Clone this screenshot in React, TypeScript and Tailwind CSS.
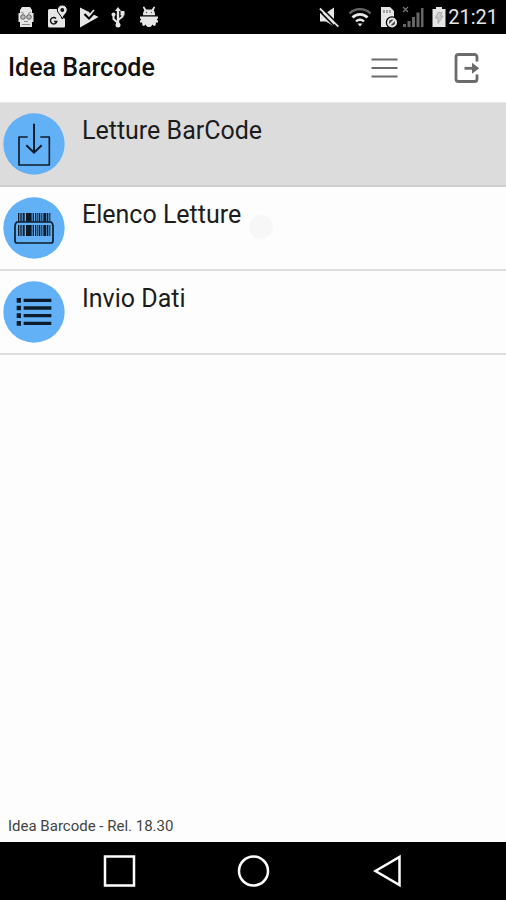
import type { ReactNode } from "react";

function StatusBar() {
  return (
    <div className="flex h-[34px] shrink-0 items-center justify-between bg-black pl-[17px] pr-2 text-[#e6e6e6]">
      <div className="flex items-center gap-3">
        {/* robot head */}
        <svg width="18" height="24" viewBox="0 0 18 24" fill="currentColor" aria-hidden="true">
          <path d="M5 2h8l2 3v3h1.500v9H15v5H3v-5H1.500V8H3V5z" />
          <path d="M4 7l3 1.500M14 7l-3 1.500M7 16.500h4M5 19.500h8" stroke="#888" strokeWidth="1" />
          <circle cx="6" cy="12" r="2.300" fill="#bbb" stroke="#555" strokeWidth="0.900" />
          <circle cx="12" cy="12" r="2.300" fill="#bbb" stroke="#555" strokeWidth="0.900" />
        </svg>
        {/* maps */}
        <svg width="21" height="24" viewBox="0 0 21 24" fill="currentColor" aria-hidden="true">
          <path d="M2.500 4H12l5 10 1-1v8.500a1 1 0 0 1-1 1H2.500a1.500 1.500 0 0 1-1.500-1.500V5.500A1.500 1.500 0 0 1 2.500 4z" />
          <path d="M9 13.500a3.200 3.200 0 1 0 .8 3H7" fill="none" stroke="#111" strokeWidth="1.400" />
          <path d="M15.300 0a5 5 0 0 1 5 5c0 3-3.500 4.500-5 9-1.500-4.500-5-6-5-9a5 5 0 0 1 5-5z" stroke="#000" strokeWidth="1" />
          <circle cx="15.300" cy="5" r="1.900" fill="#111" />
        </svg>
        {/* play store */}
        <svg width="19" height="24" viewBox="0 0 19 24" fill="currentColor" aria-hidden="true">
          <path d="M0 2.500l8 4 10.500 5.500L0 22.500z" />
          <path d="M9 8l6-5 3 3-3 4z" fill="#000" />
          <path d="M4.500 9l4.500 4.500L16 6" fill="none" stroke="#000" strokeWidth="2.200" />
          <path d="M6 7.500l3 3L14 5" fill="none" stroke="currentColor" strokeWidth="1.600" />
        </svg>
        {/* usb */}
        <svg className="-ml-0.5" width="18" height="24" viewBox="0 0 18 24" fill="currentColor" aria-hidden="true">
          <path d="M9 2l3 4h-1.800v13H7.800V6H6z" />
          <circle cx="9" cy="20" r="2.500" />
          <path d="M9 18l-4.500-4v-4M9 15l4.500-3.500V8" fill="none" stroke="currentColor" strokeWidth="2" />
          <circle cx="4.500" cy="9.500" r="2" />
          <path d="M11.500 6h4v4.500h-4z" />
        </svg>
        {/* debug bug */}
        <svg width="20" height="24" viewBox="0 0 20 24" fill="currentColor" aria-hidden="true">
          <path d="M4 10.300C4 7.500 4.500 6.500 5.300 5.500L3.800 2 5.200 1.500l2 3h5.600l2-3 1.400.5-1.500 3.500c.8 1 1.300 2 1.300 4.800z" />
          <path d="M1 11.500h18v2.200h-1v1.600h1v2.200h-2l-.5 3-1.500.5-1.500-1.500C12.500 21.500 11.500 22 10 22s-2.500-.5-3.500-2.500L5 21l-1.500-.5-.5-3H1v-2.200h1v-1.600H1z" />
          <circle cx="7.500" cy="7.500" r="0.700" fill="#555" />
          <circle cx="12.500" cy="7.500" r="0.700" fill="#555" />
        </svg>
      </div>
      <div className="flex items-center">
        {/* muted speaker */}
        <svg className="mr-2" width="22" height="24" viewBox="0 0 22 24" fill="currentColor" aria-hidden="true">
          <path d="M2 8h6l8-5.500v19L8 16.500H2z" />
          <path d="M0 4.500l17.500 18" stroke="#000" strokeWidth="1.600" />
          <path d="M2 3.500l18.500 18" stroke="currentColor" strokeWidth="2" />
          <path d="M3.500 2.500l18 18" stroke="#000" strokeWidth="1.400" />
        </svg>
        {/* wifi */}
        <svg className="mr-2" width="24" height="24" viewBox="0 0 24 24" fill="none" stroke="currentColor" aria-hidden="true">
          <path d="M1.500 8.500a15 15 0 0 1 21 0" stroke="#666" strokeWidth="2.200" />
          <path d="M4.500 12.500a10.500 10.500 0 0 1 15 0" strokeWidth="2.800" />
          <path d="M8 16.500a5.600 5.600 0 0 1 8 0" strokeWidth="2.500" />
          <path d="M9.500 18.500h5L12 21.500z" fill="currentColor" stroke="none" />
        </svg>
        {/* sim card */}
        <svg className="mr-1" width="18" height="24" viewBox="0 0 18 24" fill="currentColor" aria-hidden="true">
          <path d="M1 2h9l4 4v16H1z" />
          <path d="M4 5v3M7 5v3M10 5v3" stroke="#777" strokeWidth="1.200" />
          <circle cx="12" cy="17.500" r="4.500" fill="#555" stroke="#000" strokeWidth="3.500" />
          <circle cx="12" cy="17.500" r="4" fill="#444" stroke="currentColor" strokeWidth="2" />
          <path d="M9 20.500l6-6" stroke="currentColor" strokeWidth="2" />
        </svg>
        {/* no signal */}
        <svg className="mr-2" width="22" height="24" viewBox="0 0 22 24" fill="#666" aria-hidden="true">
          <path d="M1 19h3v3H1zM5.500 16h3v6h-3zM10 12h3v10h-3zM14.500 7.500h3V22h-3zM19 3h2.500v19H19z" />
          <path d="M1 2l5 5M6 2L1 7" stroke="#777" strokeWidth="1.200" />
        </svg>
        {/* battery */}
        <svg className="mr-0.5" width="14" height="24" viewBox="0 0 14 24" fill="currentColor" aria-hidden="true">
          <path d="M4 2h6v2h3.500v18H.5V4H4z" />
          <path d="M6 7.500h4L8.500 11H11l-5 7.500V13H3.500z" fill="#ccc" stroke="#999" strokeWidth="0.700" />
        </svg>
        <span className="text-xl leading-6">21:21</span>
      </div>
    </div>
  );
}

function Header() {
  return (
    <header className="flex h-[69px] shrink-0 items-center justify-between border-b border-[#e8e8e8] bg-white pl-2 pr-6">
      <h1 className="text-[25px] font-medium leading-8 text-[#111]">Idea Barcode</h1>
      <div className="flex items-center gap-[52px] text-[#6b6b6b]">
        <button type="button" aria-label="Menu">
          <svg width="32" height="32" viewBox="0 0 32 32" fill="none" stroke="currentColor" strokeWidth="2.200">
            <path d="M3.500 7.500h26M3.500 16h26M3.500 24.500h26" />
          </svg>
        </button>
        <button type="button" aria-label="Esci">
          <svg width="30" height="32" viewBox="0 0 30 32" fill="none" stroke="currentColor" strokeWidth="2.800">
            <path d="M25 9.500V5a2.500 2.500 0 0 0-2.500-2.500h-16A2.500 2.500 0 0 0 4 5v22a2.500 2.500 0 0 0 2.500 2.500h16A2.500 2.500 0 0 0 25 27v-4.500" />
            <path d="M12.500 16.300H21" />
            <path d="M20 10.800l7.200 5.500-7.200 5.500z" fill="currentColor" stroke="none" />
          </svg>
        </button>
      </div>
    </header>
  );
}

function Badge({ children }: { children: ReactNode }) {
  return (
    <svg className="shrink-0" width="62" height="62" viewBox="0 0 186 186" fill="none" stroke="#0c1c2b" aria-hidden="true">
      <circle cx="93" cy="93" r="92" fill="#62b0f5" stroke="none" />
      {children}
    </svg>
  );
}

// [x, width] of each bar in the barcode badge
const BARS = [
  [45, 4],
  [52, 4],
  [59, 6],
  [69, 17],
  [89, 4],
  [96, 4],
  [103, 3],
  [108, 4],
  [115, 3],
  [121, 9],
  [132, 4],
  [139, 3],
];

const ITEMS = [
  {
    label: "Letture BarCode",
    selected: true,
    icon: (
      <Badge>
        <path d="M74 72H48v84h91V72h-27" strokeWidth="5" strokeLinejoin="round" />
        <path d="M93 32v86M70 97l23 22 23-22" strokeWidth="6" />
      </Badge>
    ),
  },
  {
    label: "Elenco Letture",
    selected: false,
    icon: (
      <Badge>
        {BARS.map(([x, w]) => (
          <path key={x} d={`M${x} 48h${w}v26h-${w}zM${x} 84h${w}v33h-${w}z`} fill="#0c1c2b" stroke="none" />
        ))}
        <path
          d="M42 75h102q6 4 6 12v45q0 6-6 6H42q-6 0-6-6V87q0-8 6-12z"
          strokeWidth="5"
          strokeLinejoin="round"
        />
      </Badge>
    ),
  },
  {
    label: "Invio Dati",
    selected: false,
    icon: (
      <Badge>
        <path d="M62 58h83M62 81h83M62 104h83M62 127h83" strokeWidth="10" />
        <path
          d="M41 58h13M41 81h13M41 104h13M41 127h13"
          strokeWidth="14"
        />
      </Badge>
    ),
  },
];

function NavBar() {
  return (
    <nav className="flex h-[58px] shrink-0 items-center justify-center gap-[98px] bg-black">
      <button type="button" aria-label="Recenti">
        <svg width="36" height="36" viewBox="0 0 36 36" fill="none" stroke="#fff" strokeWidth="2.500">
          <rect x="4" y="3.500" width="29" height="29" />
        </svg>
      </button>
      <button type="button" aria-label="Home">
        <svg width="36" height="36" viewBox="0 0 36 36" fill="none" stroke="#fff" strokeWidth="2.500">
          <circle cx="18.500" cy="18" r="14.500" />
        </svg>
      </button>
      <button type="button" aria-label="Indietro">
        <svg width="36" height="36" viewBox="0 0 36 36" fill="none" stroke="#fff" strokeWidth="2.500">
          <path d="M30.500 4v28L6.500 18z" />
        </svg>
      </button>
    </nav>
  );
}

export default function App() {
  return (
    <div className="flex min-h-screen flex-col bg-[#fdfdfd] font-[Roboto,sans-serif]">
      <StatusBar />
      <Header />
      <main className="relative grow">
        <ul>
          {ITEMS.map((item) => (
            <li key={item.label}>
              <button
                type="button"
                className={
                  item.selected
                    ? "flex w-full items-start gap-[17px] border-b-2 border-[#cecece] bg-[#dcdcdc] py-2.5 pl-[3px] text-left"
                    : "flex w-full items-start gap-[17px] border-b-2 border-[#dedede] py-2.5 pl-[3px] text-left"
                }
              >
                {item.icon}
                <span className="text-[25px] leading-9 text-[#1c1c1c]">{item.label}</span>
              </button>
            </li>
          ))}
        </ul>
        {/* touch indicator */}
        <span className="pointer-events-none absolute left-[249px] top-28 size-6 rounded-full bg-[#f7f7f7]" />
      </main>
      <footer className="px-2 pb-1.5 text-[15px] leading-5 text-[#444]">Idea Barcode - Rel. 18.30</footer>
      <NavBar />
    </div>
  );
}
